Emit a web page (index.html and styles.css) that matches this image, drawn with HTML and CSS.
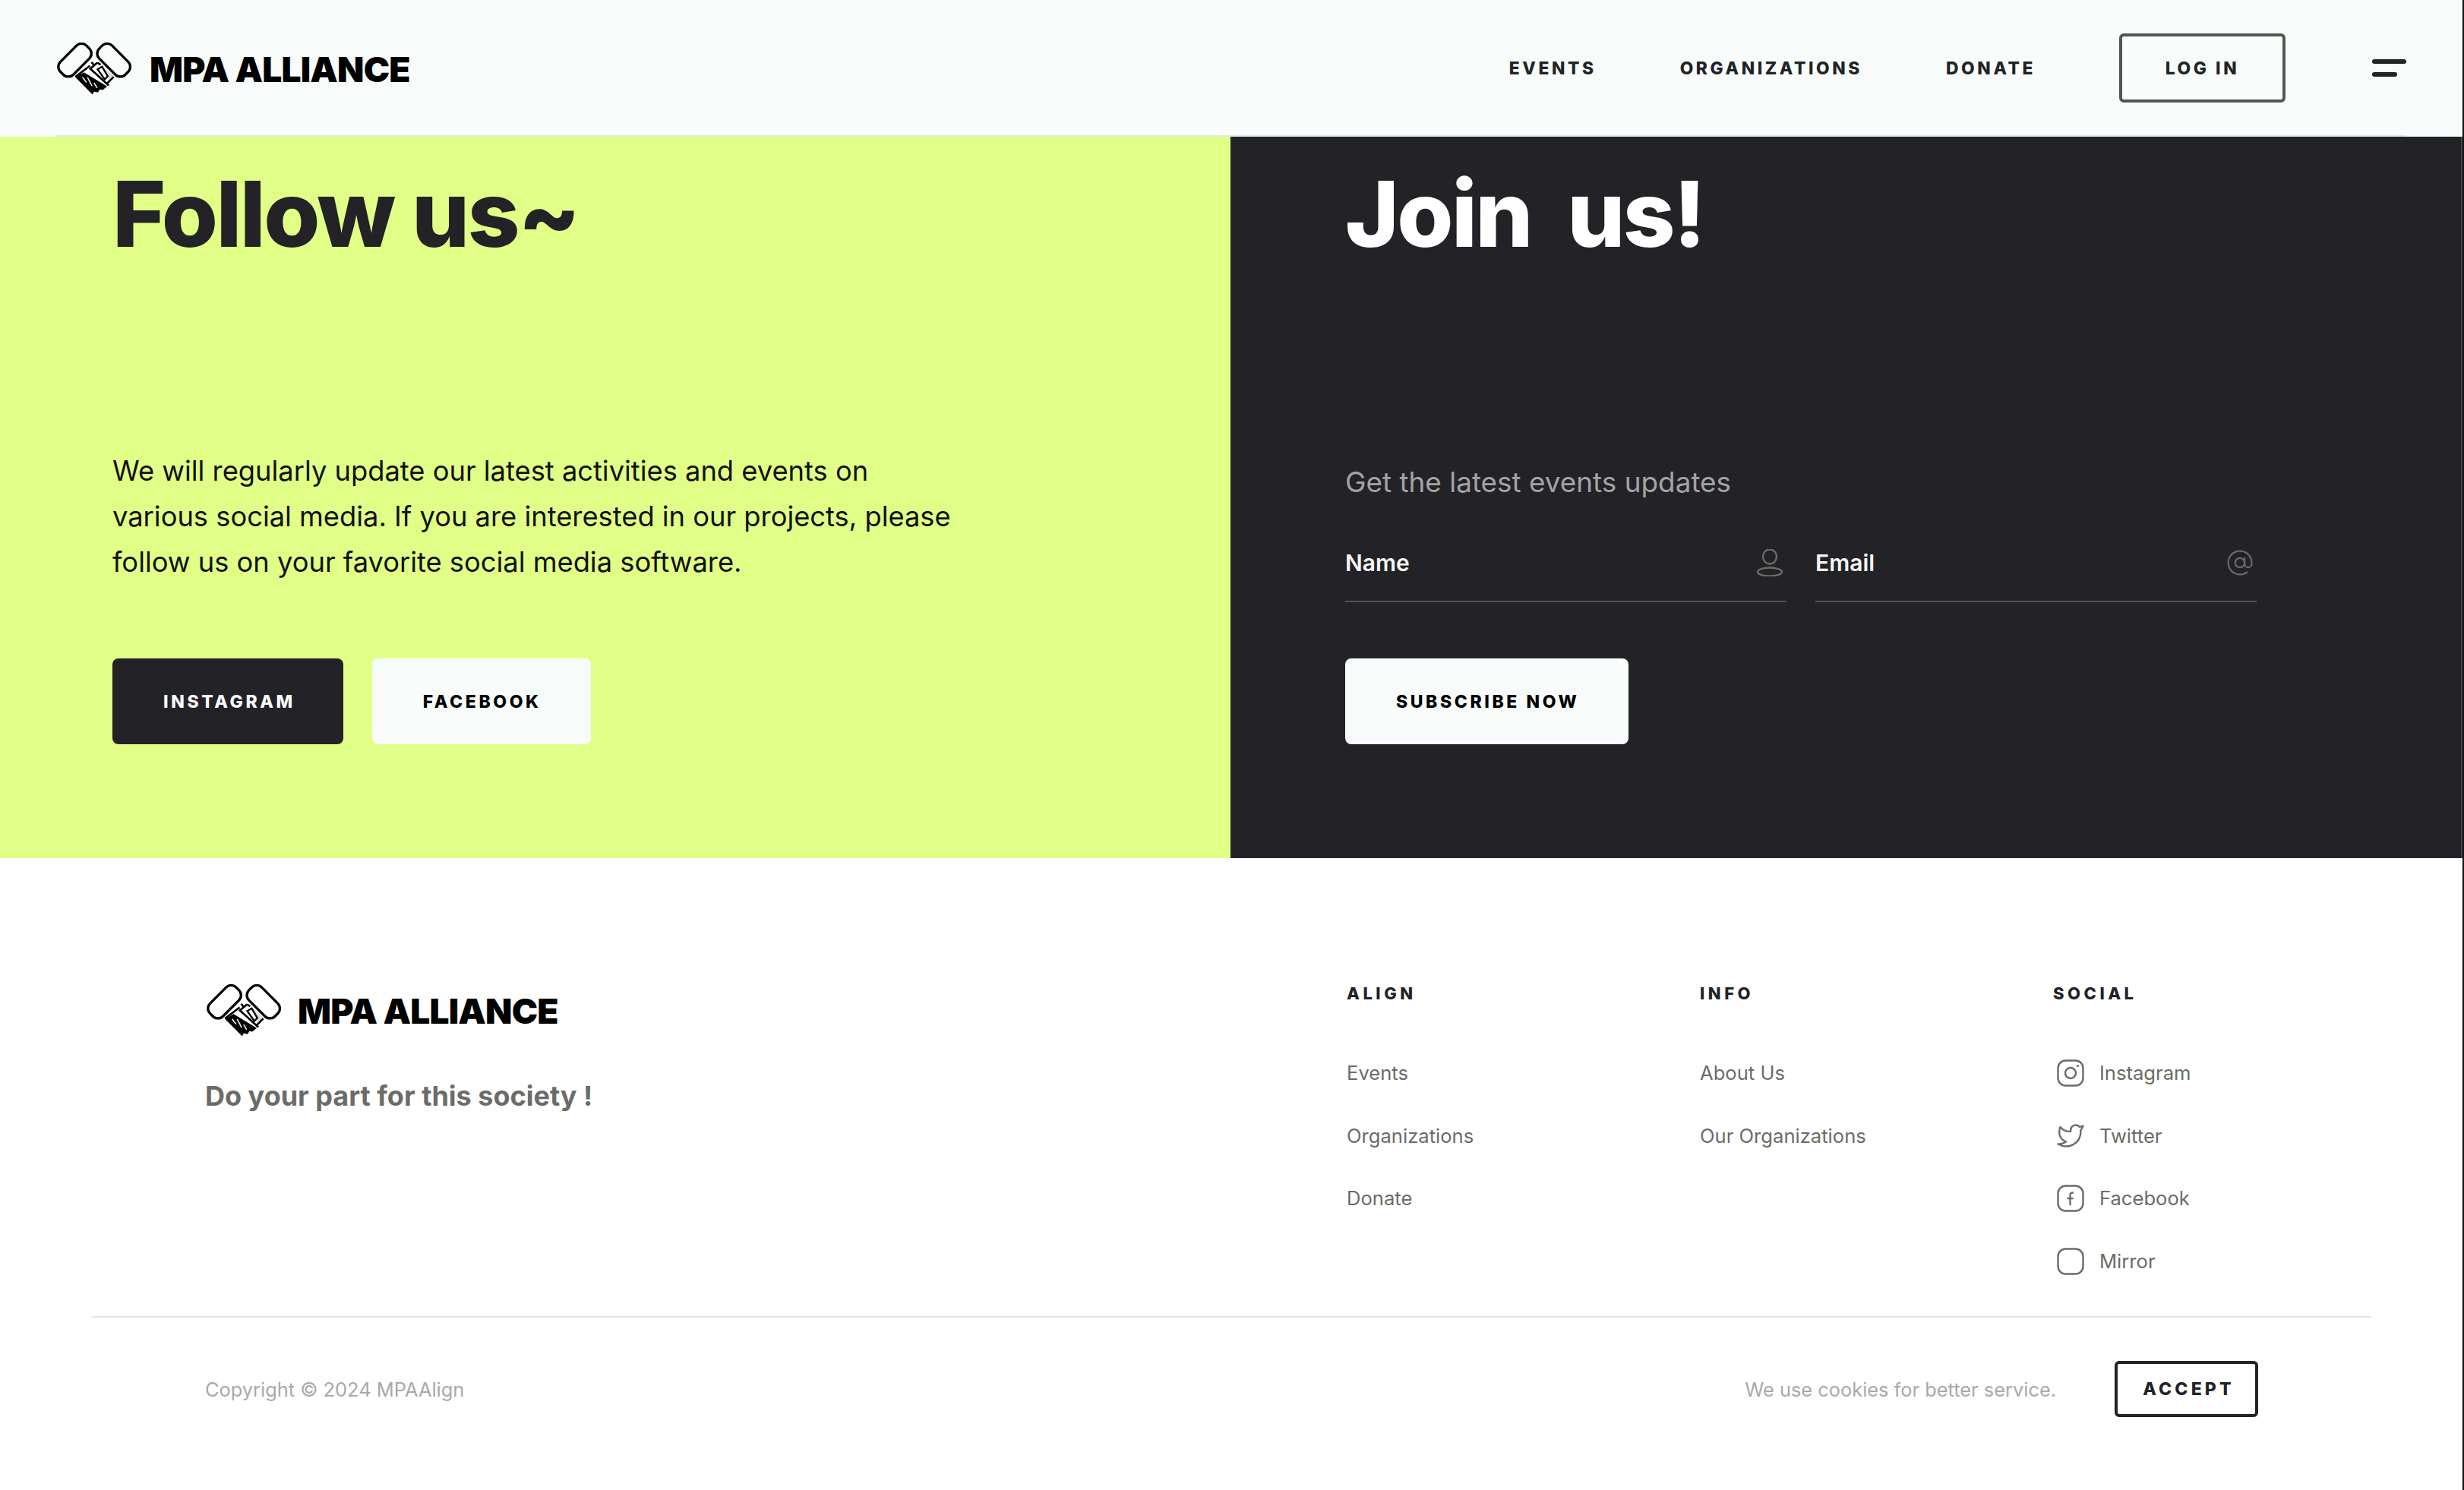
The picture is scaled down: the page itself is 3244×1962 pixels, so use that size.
FILE: index.html
```html
<!DOCTYPE html>
<html lang="en">
<head>
  <meta charset="UTF-8" />
  <title>MPA Alliance</title>
  <meta name="viewport" content="width=device-width, initial-scale=1.0" />
  <link rel="stylesheet" href="styles.css">
</head>
<body>

  <svg class="defs" width="0" height="0">
    <symbol id="handshake" viewBox="45 53 295 206">
      <g fill="none" stroke="#000" stroke-width="10" stroke-linejoin="round">
        <rect x="43" y="86" width="146" height="72" rx="28" transform="rotate(-45 116 122)" />
        <rect x="197" y="86" width="146" height="72" rx="28" transform="rotate(45 270 122)" />
      </g>
      <path d="M112 190 L190 124 L204 136 L276 190 L190 258 Z" fill="#fff" />
      <path d="M182 130 L194 144 M118 188 L176 144 M270 188 L244 214 M205 132 L177 156 L250 222 M205 132 L218 140" fill="none" stroke="#000" stroke-width="8" />
      <path d="M218 142 L268 182 L252 198 L214 160 Z" fill="#d9dcd9" />
      <path d="M206 158 L224 148 L246 186 L234 198 Z" fill="#fff" stroke="#000" stroke-width="7" />
      <path d="M118 190 L152 170 L244 226 L226 240 L215 238 L207 250 L192 246 L186 258 Z" fill="#000" />
      <path d="M146 190 L162 210 M166 190 L184 224 M192 212 L204 232" stroke="#e8ebe8" stroke-width="5" fill="none" />
    </symbol>
  </svg>

  <header class="site-header">
    <div class="header-inner">
      <a class="logo" href="#">
        <svg class="logo-mark"><use href="#handshake" /></svg>
        <span class="logo-text">MPA ALLIANCE</span>
      </a>
      <nav class="main-nav">
        <a href="#">EVENTS</a>
        <a href="#">ORGANIZATIONS</a>
        <a href="#">DONATE</a>
        <a class="login-btn" href="#">LOG IN</a>
        <button class="menu-btn" aria-label="Menu"><span></span><span class="short"></span></button>
      </nav>
    </div>
  </header>

  <main class="panels">
    <!-- Follow -->
    <section class="panel follow">
      <h1>Follow us~</h1>
      <div class="panel-body">
        <p class="follow-text">We will regularly update our latest activities and events on various social media. If you are interested in our projects, please follow us on your favorite social media software.</p>
      </div>
      <div class="btn-row">
        <a class="btn btn-dark" href="#">INSTAGRAM</a>
        <a class="btn btn-light" href="#">FACEBOOK</a>
      </div>
    </section>

    <!-- Join -->
    <section class="panel join">
      <h1>Join&nbsp; us!</h1>
      <div class="panel-body">
        <p class="join-text">Get the latest events updates</p>
        <form class="join-form">
          <label class="field">
            <span>Name</span>
            <svg class="field-icon" viewBox="0 0 34 36" fill="none" stroke="#6b6c66" stroke-width="2.4">
              <ellipse cx="17" cy="10" rx="9" ry="9.5" />
              <ellipse cx="17" cy="30" rx="16" ry="5.5" />
            </svg>
          </label>
          <label class="field">
            <span>Email</span>
            <svg class="field-icon" viewBox="1 1 22 22" fill="none" stroke="#6b6c66" stroke-width="1.4" stroke-linecap="round">
              <circle cx="12" cy="12" r="4" />
              <path d="M16 8v5a3 3 0 0 0 6 0v-1a10 10 0 1 0-3.92 7.94" />
            </svg>
          </label>
        </form>
      </div>
      <div class="btn-row">
        <a class="btn btn-light" href="#">SUBSCRIBE NOW</a>
      </div>
    </section>
  </main>

  <footer class="site-footer">
    <div class="footer-main">
      <div class="footer-brand">
        <a class="logo" href="#">
          <svg class="logo-mark"><use href="#handshake" /></svg>
          <span class="logo-text">MPA ALLIANCE</span>
        </a>
        <p class="tagline">Do your part for this society !</p>
      </div>
      <div class="footer-col">
        <h4>ALIGN</h4>
        <ul>
          <li>Events</li>
          <li>Organizations</li>
          <li>Donate</li>
        </ul>
      </div>
      <div class="footer-col">
        <h4>INFO</h4>
        <ul>
          <li>About Us</li>
          <li>Our Organizations</li>
        </ul>
      </div>
      <div class="footer-col">
        <h4>SOCIAL</h4>
        <ul class="social">
          <li>
            <svg class="social-icon" viewBox="0 0 36 36" fill="none" stroke="#6b6c66" stroke-width="2.4">
              <rect x="1.5" y="1.5" width="33" height="33" rx="10" />
              <circle cx="18" cy="18" r="7" />
              <circle cx="27.5" cy="8.5" r="1.6" fill="#6b6c66" stroke="none" />
            </svg>
            Instagram
          </li>
          <li>
            <svg class="social-icon" viewBox="0 0 24 24" fill="none" stroke="#6b6c66" stroke-width="1.6" stroke-linejoin="round">
              <path d="M23 3a10.9 10.9 0 0 1-3 .9 4.48 4.48 0 0 0-7.86 3v1A10.66 10.66 0 0 1 3 4s-4 9 5 13a11.64 11.64 0 0 1-7 2c9 5 20 0 20-11.5a4.5 4.5 0 0 0-.08-.83A7.72 7.72 0 0 0 23 3z" />
            </svg>
            Twitter
          </li>
          <li>
            <svg class="social-icon" viewBox="0 0 36 36" fill="none" stroke="#6b6c66" stroke-width="2.4">
              <rect x="1.5" y="1.5" width="33" height="33" rx="10" />
              <path d="M22 10.5h-1.5a3 3 0 0 0-3 3V27M13.5 18h8" />
            </svg>
            Facebook
          </li>
          <li>
            <svg class="social-icon" viewBox="0 0 36 36" fill="none" stroke="#6b6c66" stroke-width="2.4">
              <rect x="1.5" y="1.5" width="33" height="33" rx="10" />
            </svg>
            Mirror
          </li>
        </ul>
      </div>
    </div>
    <div class="footer-bottom">
      <p class="copyright">Copyright © 2024 MPAAlign</p>
      <div class="cookies">
        <p>We use cookies for better service.</p>
        <button class="accept-btn">ACCEPT</button>
      </div>
    </div>
  </footer>

</body>
</html>
```

FILE: styles.css
```css
* {
  box-sizing: border-box;
}
body {
  font-family: Inter, "Liberation Sans", sans-serif;
  background: #fff;
  margin: 0;
  padding: 0;
  color: #222227;
  min-height: 100vh;
  border-right: 2px solid #111;
}
a {
  color: inherit;
  text-decoration: none;
}
p, h1, h4, ul {
  margin: 0;
  padding: 0;
}
ul {
  list-style: none;
}
.defs {
  display: block;
  height: 0;
}

/* Header */
.site-header {
  background: #f7fbfa;
  height: 180px;
}
.header-inner {
  height: 180px;
  margin: 0 74px 0 73px;
  padding-left: 2px;
  border-bottom: 2px solid #e4e7e5;
  display: flex;
  align-items: center;
  justify-content: space-between;
}
.logo {
  display: flex;
  align-items: center;
  gap: 24px;
  color: #000;
}
.logo-mark {
  width: 98px;
  height: 69px;
  margin-top: 2px;
}
.logo-text {
  font-size: 46px;
  font-weight: 900;
  letter-spacing: -0.8px;
  line-height: 1;
  margin-top: 3px;
}
.main-nav {
  display: flex;
  align-items: center;
  gap: 110px;
  font-size: 22.8px;
  font-weight: 800;
  letter-spacing: 3.6px;
}
.login-btn {
  width: 219px;
  height: 91px;
  border: 4px solid #55564e;
  border-radius: 6px;
  display: flex;
  align-items: center;
  justify-content: center;
}
.menu-btn {
  width: 45px;
  padding: 0;
  margin-left: 4px;
  background: none;
  border: none;
  display: flex;
  flex-direction: column;
  gap: 11px;
}
.menu-btn span {
  display: block;
  width: 45px;
  height: 6px;
  border-radius: 3px;
  background: #222227;
}
.menu-btn span.short {
  width: 33px;
}

/* Follow / Join panels */
.panels {
  display: grid;
  grid-template-columns: 1620px 1fr;
  height: 950px;
}
.panel {
  padding-left: 148px;
  display: flex;
  flex-direction: column;
}
.panel h1 {
  font-size: 120px;
  font-weight: 800;
  letter-spacing: -2.6px;
  line-height: 124px;
  margin-top: 40px;
}
.panel-body {
  height: 523px;
}
.follow {
  background: #e1ff86;
  color: #222227;
}
.join {
  background: #222227;
  color: #fff;
  padding-left: 151px;
  border-right: 2px solid #44453f;
}
.follow-text {
  width: 1120px;
  margin-top: 246px;
  font-size: 36.3px;
  line-height: 60px;
  color: #111;
}
.join-text {
  margin-top: 261px;
  font-size: 36.9px;
  line-height: 60px;
  color: #a3a3a3;
}
.join-form {
  display: flex;
  gap: 38px;
  margin-top: 42px;
}
.field {
  width: 581px;
  height: 86px;
  border-bottom: 2px solid #55564e;
  display: flex;
  align-items: center;
  justify-content: space-between;
  font-size: 30px;
  font-weight: 600;
  color: #f5f5f5;
  padding-bottom: 16px;
}
.field-icon {
  width: 34px;
  height: 36px;
  margin-right: 5px;
}
.btn-row {
  display: flex;
  gap: 38px;
}
.btn {
  height: 113px;
  border-radius: 8px;
  padding: 0 65px 0 67px;
  display: flex;
  align-items: center;
  font-size: 23px;
  font-weight: 800;
  letter-spacing: 3.6px;
}
.btn-dark {
  background: #222227;
  color: #f7fbfa;
  padding-right: 63px;
}
.btn-light {
  background: #f7fbfa;
  color: #000;
}

/* Footer */
.footer-main {
  height: 603px;
  padding: 164px 0 0 270px;
  display: flex;
}
.footer-brand {
  width: 1503px;
}
.footer-brand .logo {
  margin-left: 2px;
  gap: 22px;
}
.tagline {
  margin-top: 56px;
  font-size: 36px;
  font-weight: 700;
  color: #6b6c68;
}
.footer-col {
  width: 465px;
  margin-top: -4px;
}
.footer-col h4 {
  font-size: 22px;
  font-weight: 800;
  letter-spacing: 4.5px;
  line-height: 36px;
}
.footer-col ul {
  margin-top: 69px;
  display: flex;
  flex-direction: column;
  gap: 46.6px;
  font-size: 25.6px;
  line-height: 36px;
  color: #6b6c66;
}
.social li {
  display: flex;
  align-items: center;
  gap: 20px;
  margin-left: 5px;
}
.social-icon {
  width: 36px;
  height: 36px;
}
.footer-bottom {
  margin: 0 120px 0 120px;
  border-top: 2px solid #e4e7e5;
  padding: 57px 149px 0 150px;
  display: flex;
  align-items: center;
  justify-content: space-between;
  font-size: 25.4px;
  color: #a7aaa8;
}
.cookies {
  display: flex;
  align-items: center;
  gap: 77px;
}
.accept-btn {
  width: 189px;
  height: 74px;
  padding: 0 0 0 6px;
  background: #fff;
  border: 4px solid #222227;
  border-radius: 6px;
  font-family: inherit;
  font-size: 23px;
  font-weight: 800;
  letter-spacing: 4.2px;
  color: #222227;
}
```
